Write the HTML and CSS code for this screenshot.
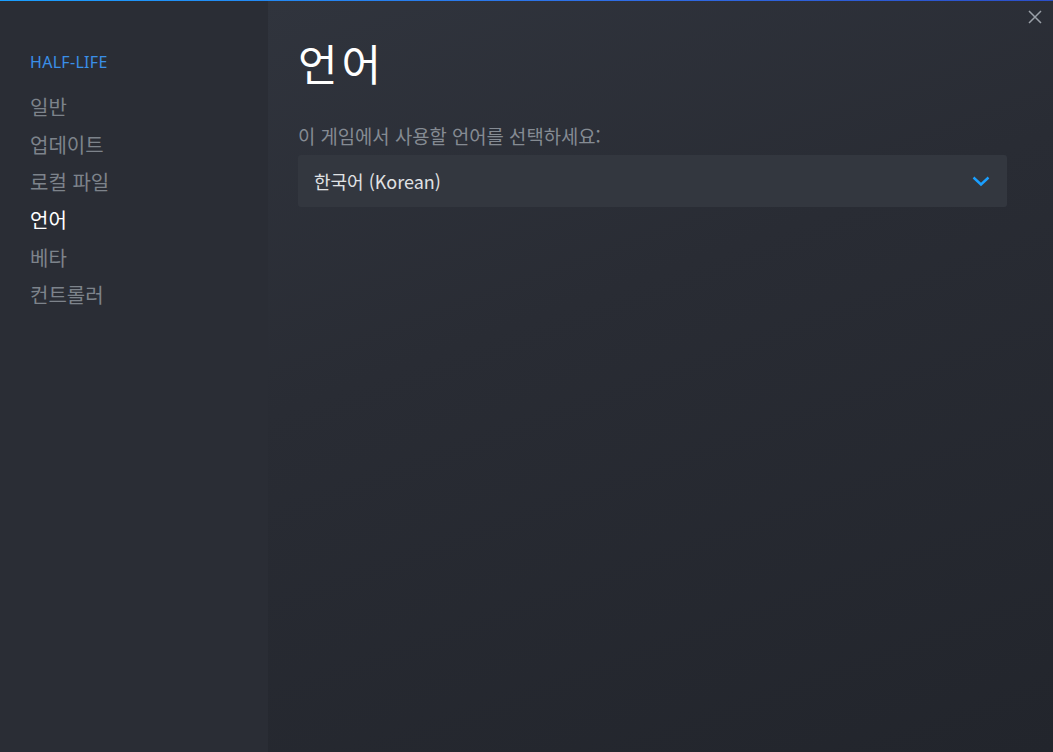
FILE: index.html
```html
<!DOCTYPE html>
<html lang="ko">
<head>
<meta charset="utf-8">
<title>HALF-LIFE 속성</title>
<link rel="stylesheet" href="styles.css">
</head>
<body>
<div class="window">
  <div class="topline"></div>
  <div class="body">
    <aside class="sidebar">
      <div class="game">HALF-LIFE</div>
      <nav class="nav">
        <div class="nav-item">일반</div>
        <div class="nav-item">업데이트</div>
        <div class="nav-item">로컬 파일</div>
        <div class="nav-item active">언어</div>
        <div class="nav-item">베타</div>
        <div class="nav-item">컨트롤러</div>
      </nav>
    </aside>
    <main class="main">
      <h1 class="title">언어</h1>
      <div class="label">이 게임에서 사용할 언어를 선택하세요:</div>
      <div class="select">
        <span class="select-text">한국어 (Korean)</span>
        <svg class="chev" width="18" height="11" viewBox="0 0 18 11"><path d="M1.5 1.5 L9 8.5 L16.5 1.5" fill="none" stroke="#1a9fff" stroke-width="2.4"/></svg>
      </div>
    </main>
  </div>
  <button class="close" aria-label="닫기">
    <svg width="14" height="14" viewBox="0 0 14 14"><path d="M1 1 L13 13 M13 1 L1 13" stroke="#9aa0a8" stroke-width="1.5" fill="none"/></svg>
  </button>
</div>
</body>
</html>
```
FILE: styles.css
```css
* { box-sizing: border-box; }
html, body { margin: 0; padding: 0; }
body {
  width: 1053px;
  height: 752px;
  overflow: hidden;
  font-family: "Noto Sans CJK KR", "Noto Sans", sans-serif;
  background: #23262e;
}
.window {
  position: relative;
  width: 1053px;
  height: 752px;
  display: flex;
  flex-direction: column;
}
.topline {
  height: 1px;
  flex: none;
  background: linear-gradient(90deg, #1a9fff 0%, #2f6ce5 60%, #2b4fc9 100%);
}
.body {
  flex: 1;
  display: flex;
}
.sidebar {
  width: 268px;
  flex: none;
  background: #2a2d35;
  padding: 48px 0 0 30px;
}
.game {
  color: #3a8fe8;
  font-family: "Noto Sans", "Noto Sans CJK KR", sans-serif;
  font-size: 16px;
  line-height: 26px;
  letter-spacing: 0.3px;
}
.nav {
  margin-top: 13px;
  display: flex;
  flex-direction: column;
}
.nav-item {
  color: #7d838b;
  font-size: 20px;
  line-height: 37.7px;
  height: 37.7px;
}
.nav-item.active { color: #ffffff; }
.main {
  flex: 1;
  background: linear-gradient(160deg, #30343d 0%, #292c34 40%, #22252c 100%);
  padding: 0 46px 0 30px;
}
.title {
  margin: 30px 0 0 0;
  font-weight: 400;
  font-size: 43px;
  line-height: 62px;
  color: #ffffff;
  letter-spacing: 4px;
}
.label {
  margin-top: 30px;
  color: #858b93;
  font-size: 18.8px;
  line-height: 26px;
}
.select {
  margin-top: 6px;
  height: 52px;
  background: #33373f;
  border-radius: 3px;
  display: flex;
  align-items: center;
  justify-content: space-between;
  padding: 0 17px 0 16px;
}
.select-text {
  color: #e0e2e4;
  font-size: 18px;
}
.chev { display: block; margin-top: 0; }
.close {
  position: absolute;
  top: 9px;
  right: 10px;
  width: 16px;
  height: 16px;
  padding: 0;
  border: 0;
  background: transparent;
  display: flex;
  align-items: center;
  justify-content: center;
}
```
